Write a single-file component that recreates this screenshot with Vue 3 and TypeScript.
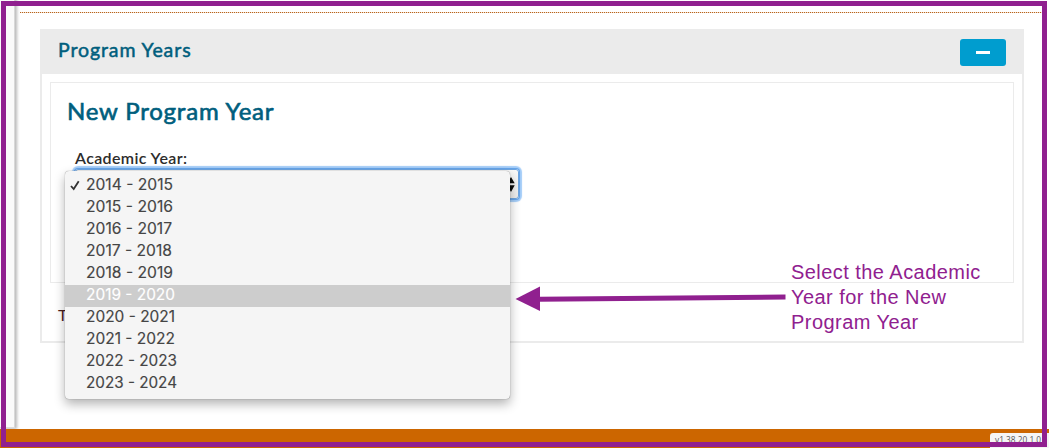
<script setup lang="ts">
import { ref } from 'vue'

interface YearOption { label: string; width: number }

const years: YearOption[] = [
  { label: '2014 - 2015', width: 87 },
  { label: '2015 - 2016', width: 87 },
  { label: '2016 - 2017', width: 86 },
  { label: '2017 - 2018', width: 86 },
  { label: '2018 - 2019', width: 87 },
  { label: '2019 - 2020', width: 89 },
  { label: '2020 - 2021', width: 89 },
  { label: '2021 - 2022', width: 89 },
  { label: '2022 - 2023', width: 91 },
  { label: '2023 - 2024', width: 91 },
]
const selected = ref<number>(0)
const highlighted = ref<number>(5)
</script>

<template>
  <div class="page">
    <div class="body">
      <aside class="sidebar"></aside>
      <main class="main">
        <div class="dotted"></div>
        <section class="panel">
          <header class="panel-head">
            <h3 class="panel-title">Program Years</h3>
            <button class="collapse" aria-label="Collapse"><span class="minus"></span></button>
          </header>
          <div class="card">
            <h2 class="card-title">New Program Year</h2>
            <label class="label">Academic Year:</label>
            <div class="field">
              <div class="select">
                <svg class="arrows" width="8" height="15" viewBox="0 0 8 15">
                  <path d="M4 0 7.7 6.3H.3zM4 15 .3 8.3h7.4z" />
                </svg>
              </div>
              <ul class="menu">
                <li
                  v-for="(y, i) in years"
                  :key="y.label"
                  class="option"
                  :class="{ active: i === highlighted }"
                >
                  <span class="tick">
                    <svg v-if="i === selected" width="10" height="11" viewBox="0 0 10 11">
                      <path d="M1 6 3.7 9 8.7 1.3" />
                    </svg>
                  </span>
                  <svg class="year" width="100" height="22">
                    <text x="0" y="15" :textLength="y.width" lengthAdjust="spacingAndGlyphs">{{ y.label }}</text>
                  </svg>
                </li>
              </ul>
            </div>
          </div>
          <p class="note">T</p>
        </section>
      </main>
    </div>
    <footer class="footer"><span class="version">v1.38.20.1.0</span></footer>

    <svg class="arrow" width="272" height="28" viewBox="0 0 272 28">
      <path d="M24 14.3 270.5 12" />
      <polygon points="0.5,14 25,1.5 25,26" />
    </svg>
    <p class="callout">Select the Academic<br />Year for the New<br />Program Year</p>
    <div class="frame"></div>
  </div>
</template>

<style>
body { margin: 0; background: #fff; }
</style>

<style scoped>
* { box-sizing: border-box; }
.page {
  position: relative;
  width: 1049px;
  height: 448px;
  overflow: hidden;
  display: flex;
  flex-direction: column;
  background: #fff;
  font-family: "Lato", "Open Sans", sans-serif;
}
.body { height: 429px; flex: none; display: flex; }
.sidebar {
  width: 15px;
  height: 428px;
  flex: none;
  background: #fafafa;
  border-bottom: 1px solid #ddd;
  border-right: 1px solid #d8d8d8;
  box-shadow: 1px 0 3px 1px rgba(0, 0, 0, 0.28);
}
.main { flex: 1; padding: 12px 7px 0 5px; }
.dotted {
  height: 1px;
  background: repeating-linear-gradient(90deg, #b8651c 0 1px, #f3e0d0 1px 2px);
}
.panel {
  width: 984px;
  height: 314px;
  margin: 16px 0 0 20px;
  border: 2px solid #ebebeb;
}
.panel-head {
  height: 43px;
  padding: 0 16px;
  display: flex;
  justify-content: space-between;
  background: #ebebeb;
}
.panel-title {
  margin: 6px 0 0;
  font-size: 19.5px;
  line-height: 26px;
  font-weight: 400;
  letter-spacing: 0.9px;
  -webkit-text-stroke: 0.5px #005e7d;
  color: #005e7d;
}
.collapse {
  width: 46px;
  height: 27px;
  margin-top: 8px;
  padding: 0;
  border: 0;
  border-radius: 3px;
  background: #009dcf;
  display: flex;
  align-items: center;
  justify-content: center;
}
.minus { width: 14px; height: 3px; background: #fff; margin-top: -1px; }
.card {
  width: 964px;
  height: 201px;
  margin: 8px 0 0 8px;
  border: 1px solid #ebebeb;
}
.card-title {
  margin: 12px 0 0 16px;
  font-size: 24px;
  line-height: 32px;
  font-weight: 400;
  letter-spacing: 0.8px;
  -webkit-text-stroke: 0.65px #005e7d;
  color: #005e7d;
}
.label {
  display: block;
  margin: 21px 0 1px 24px;
  font-size: 16px;
  line-height: 20px;
  height: 20px;
  font-weight: 600;
  letter-spacing: 0.37px;
  color: #2c2c2c;
}
.field { position: relative; margin-left: 24px; }
.select {
  width: 444px;
  height: 30px;
  display: flex;
  align-items: center;
  justify-content: flex-end;
  padding-right: 3px;
  border-radius: 3px;
  background: linear-gradient(#f9f9f9, #ececec);
  border: 1px solid #6fa5df;
  box-shadow: 0 0 0 1px #65a4ea, 0 0 1px 3px #a3ccf8;
}
.arrows { fill: #0b0b0b; }
.menu {
  position: absolute;
  z-index: 2;
  left: -10px;
  top: 2px;
  width: 445px;
  height: 228px;
  margin: 0;
  padding: 4px 0;
  list-style: none;
  border-radius: 4px;
  background: #f5f5f5;
  box-shadow: 0 0 1px rgba(0, 0, 0, 0.55), 0 5px 11px rgba(0, 0, 0, 0.3);
}
.option { display: flex; height: 22px; align-items: center; }
.tick { width: 21px; height: 22px; padding: 5px 0 0 5px; line-height: 0; flex: none; }
.tick path { fill: none; stroke: #333; stroke-width: 1.8; }
.year text { font: 400 15.6px "Inter", sans-serif; fill: #454545; stroke: #454545; stroke-width: 0.15; }
.active { background: #cdcdcd; }
.active .year text { fill: #fff; stroke: #fff; }
.note { margin: 22px 0 0 16px; font-size: 16px; line-height: 20px; color: #4a2020; }
.footer { flex: 1; display: flex; justify-content: flex-end; padding: 4px 0 0; background: #c60; }
.version {
  width: 59px;
  height: 15px;
  padding-left: 5px;
  border-radius: 3px 0 0;
  background: #f5f5f5;
  color: #555;
  font: 8.3px/13px "Open Sans", sans-serif;
  white-space: nowrap;
}
.arrow { position: absolute; left: 515px; top: 285px; }
.arrow path { stroke: #90208f; stroke-width: 5; }
.arrow polygon { fill: #90208f; }
.callout {
  position: absolute;
  left: 791px;
  top: 260px;
  margin: 0;
  font: 20px/25px "Liberation Sans", Arial, sans-serif;
  letter-spacing: 0.45px;
  color: #90208f;
  white-space: nowrap;
}
.frame { position: absolute; left: 1px; top: 1px; width: 1046px; height: 446px; border: 5px solid #90208f; }
</style>
